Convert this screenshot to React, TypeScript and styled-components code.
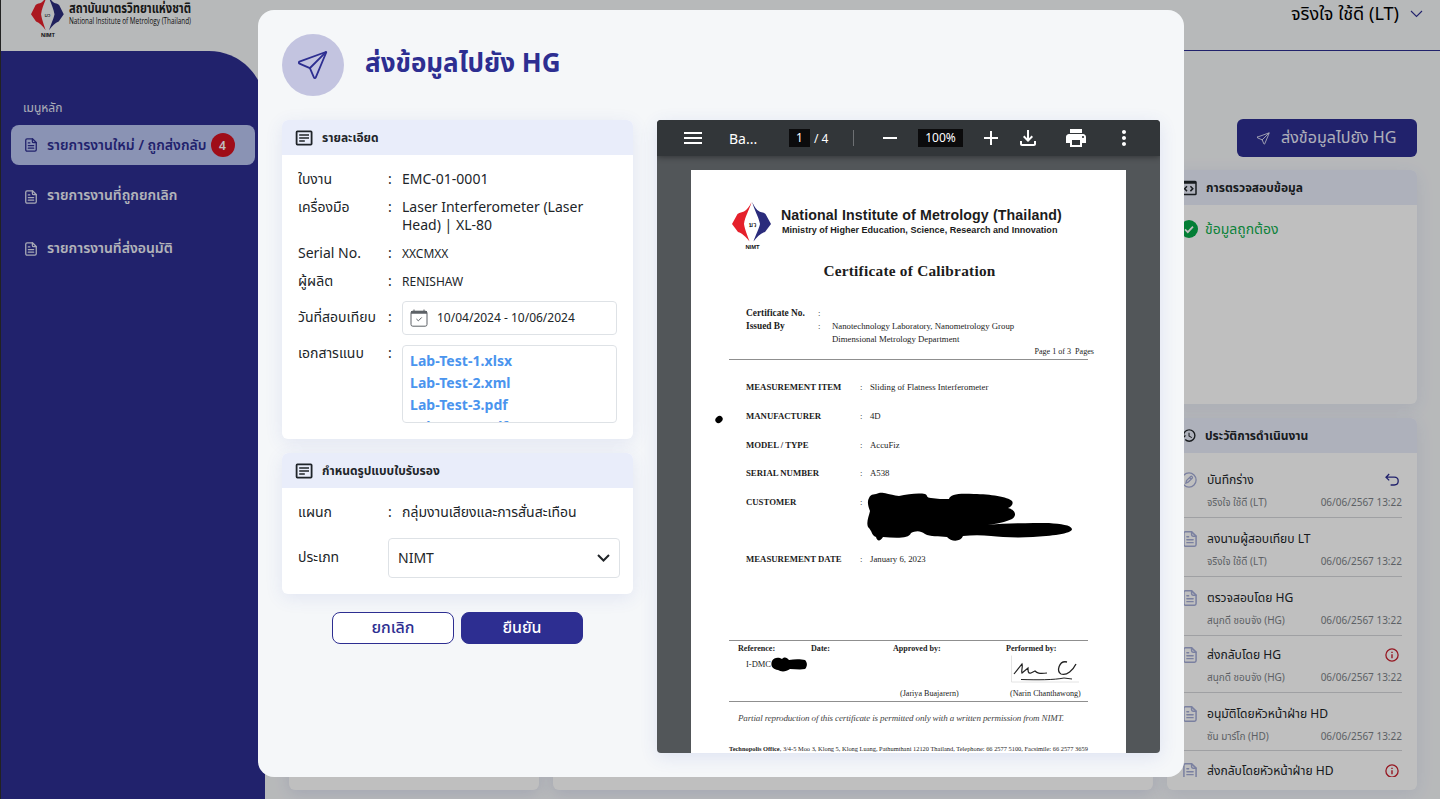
import React from "react";
import styled, { createGlobalStyle } from "styled-components";
import {
  MdAdd,
  MdHistory,
  MdMenu,
  MdMoreVert,
  MdOutlineFileDownload,
  MdPrint,
} from "react-icons/md";

const Global = createGlobalStyle`
  *, *::before, *::after { box-sizing: border-box; }
  html, body { margin: 0; padding: 0; overflow: hidden; }
  body {
    font-family: "Noto Sans", "Noto Sans Thai", sans-serif;
    font-size: 14px;
    color: #212529;
  }
  svg { display: block; flex: none; }
`;

const NAVY = "#2d2e91";

/* ---------- page shell ---------- */

const Screen = styled.div`
  position: relative;
  width: 1440px;
  height: 799px;
  overflow: hidden;
  display: flex;
  flex-direction: column;
  background: #f5f7f9;
  border-left: 1px solid #222;
`;

const TopBar = styled.header`
  height: 51px;
  flex: none;
  display: flex;
`;

const Brand = styled.div`
  width: 264px;
  flex: none;
`;

const UserArea = styled.div`
  flex: 1;
  display: flex;
  justify-content: flex-end;
  border-bottom: 1px solid ${NAVY};
`;

const UserMenu = styled.div`
  display: flex;
  align-items: center;
  gap: 11px;
  height: 28px;
  padding-right: 17px;
  color: #000;
`;

const UserName = styled.span`
  font-size: 18.1px;
  line-height: 26px;
  padding-bottom: 2px;
`;

const Body = styled.div`
  flex: 1;
  min-height: 0;
  display: flex;
`;

const Sidebar = styled.nav`
  width: 264px;
  flex: none;
  padding: 47px 10px 0;
  background: ${NAVY};
  border-top-right-radius: 56px;
`;

const MenuHeading = styled.div`
  padding-left: 12px;
  height: 20px;
  line-height: 20px;
  margin-bottom: 7px;
  font-size: 12px;
  color: #e6e9f5;
`;

const MenuItem = styled.div<{ $active?: boolean }>`
  display: flex;
  align-items: center;
  height: 40px;
  margin-bottom: 12px;
  padding-left: 14px;
  border-radius: 8px;
  font-size: 14px;
  font-weight: 600;
  color: ${(p) => (p.$active ? NAVY : "#eef0f8")};
  background: ${(p) => (p.$active ? "#b9c4f1" : "transparent")};
`;

const MenuLabel = styled.span<{ $lift?: number }>`
  margin-left: 10px;
  padding-bottom: ${(p) => p.$lift ?? 0}px;
  white-space: nowrap;
`;

const Badge = styled.span`
  width: 24px;
  height: 24px;
  margin-left: 4px;
  border-radius: 50%;
  display: grid;
  place-items: center;
  background: #d41220;
  color: #fff;
  font-size: 12px;
`;

const Workspace = styled.main`
  flex: 1;
  display: grid;
  grid-template-columns: 250px 600px 250px;
  column-gap: 14px;
  padding: 68px 23px 9px 24px;
`;

const BlankPanel = styled.div`
  background: #fff;
  border-radius: 6px;
  box-shadow: 0 4px 16px rgba(45, 60, 170, 0.12);
`;

const RightColumn = styled.div`
  display: flex;
  flex-direction: column;
  min-height: 0;
`;

const SendButton = styled.button`
  align-self: flex-end;
  width: 180px;
  height: 38px;
  flex: none;
  margin-bottom: 13px;
  border: 0;
  border-radius: 6px;
  display: flex;
  align-items: center;
  justify-content: flex-start;
  gap: 11px;
  padding: 0 0 0 20px;
  background: ${NAVY};
  color: #e9eaf8;
  font-family: inherit;
  font-size: 16.1px;
  white-space: nowrap;
`;

const Panel = styled.section<{ $height: number; $gap?: number }>`
  height: ${(p) => p.$height}px;
  margin-bottom: ${(p) => p.$gap ?? 0}px;
  flex: none;
  display: flex;
  flex-direction: column;
  border-radius: 6px;
  overflow: hidden;
  background: #fff;
  box-shadow: 0 4px 18px rgba(60, 80, 190, 0.1);
`;

const PanelHead = styled.h3<{ $gap?: number }>`
  height: 35px;
  flex: none;
  margin: 0;
  padding: 0 0 0 13px;
  display: flex;
  align-items: center;
  gap: ${(p) => p.$gap ?? 9}px;
  background: #e9edfa;
  font-size: 12px;
  line-height: 16px;
  font-weight: 700;
`;

const Valid = styled.div`
  display: flex;
  align-items: center;
  gap: 7px;
  padding: 14px 0 0 13px;
  line-height: 20px;
  color: #0fae4e;
`;

const HistoryList = styled.div`
  height: 324px;
  padding: 6px 15px 0 14px;
  overflow: hidden;
`;

const HistoryItem = styled.div<{ $height: number; $top: number }>`
  display: grid;
  grid-template-columns: 16px 1fr auto;
  grid-template-rows: 24px 1fr;
  column-gap: 10px;
  height: ${(p) => p.$height}px;
  padding-top: ${(p) => p.$top}px;
  border-bottom: 1px solid #d4d6da;
  > svg { align-self: center; justify-self: end; }
  > svg:nth-child(3) { margin-right: 3px; }
`;

const HistoryTitle = styled.div`
  line-height: 24px;
  font-size: 12.1px;
  white-space: nowrap;
`;

const HistoryMeta = styled.div`
  grid-column: 2 / 4;
  display: flex;
  justify-content: space-between;
  font-size: 10px;
  line-height: 21px;
  color: #7d8187;
`;

/* ---------- modal ---------- */

const Backdrop = styled.div`
  position: absolute;
  inset: 0 0 0 -1px;
  background: rgba(0, 0, 0, 0.25);
`;

const Modal = styled.div`
  position: absolute;
  left: 257px;
  top: 10px;
  width: 926px;
  height: 767px;
  padding: 24px;
  border-radius: 16px;
  background: #f5f7f9;
  display: flex;
  flex-direction: column;
`;

const ModalHead = styled.div`
  display: flex;
  align-items: center;
  gap: 21px;
  margin-bottom: 24px;
`;

const IconDisc = styled.div`
  width: 62px;
  height: 62px;
  border-radius: 50%;
  display: grid;
  place-items: center;
  background: #c3c4e0;
  color: ${NAVY};
`;

const ModalTitle = styled.h1`
  margin: 0;
  font-size: 26px;
  line-height: 36px;
  font-weight: 700;
  color: ${NAVY};
  padding-bottom: 6px;
`;

const ModalBody = styled.div`
  display: grid;
  grid-template-columns: 351px 503px;
  column-gap: 24px;
  height: 633px;
`;

const Fields = styled.div`
  display: flex;
  flex-direction: column;
  gap: 10px;
  padding: 15px 16px 0;
`;

const Field = styled.div<{ $pad?: number; $offset?: number }>`
  display: grid;
  grid-template-columns: 90px 14px 1fr;
  line-height: 18px;
  margin-top: ${(p) => p.$offset ?? 0}px;
  > span { padding-top: ${(p) => p.$pad ?? 0}px; white-space: nowrap; }
`;

const Value = styled.div<{ $small?: boolean }>`
  font-size: ${(p) => (p.$small ? 12 : 14)}px;
  padding-top: ${(p) => (p.$small ? 1 : 0)}px;
  height: ${(p) => (p.$small ? "18px" : "auto")};
`;

const DateBox = styled.div`
  height: 34px;
  display: flex;
  align-items: center;
  gap: 9px;
  padding-left: 7px;
  width: 215px;
  border: 1px solid #dee2e6;
  border-radius: 4px;
  font-size: 12px;
`;

const FileBox = styled.div`
  height: 78px;
  width: 215px;
  margin-top: 1px;
  padding: 4px 7px;
  border: 1px solid #dee2e6;
  border-radius: 4px;
  overflow: hidden;
`;

const FileLink = styled.a`
  display: block;
  line-height: 22px;
  font-weight: 700;
  letter-spacing: 0.05px;
  color: #4a94ee;
`;

const SelectRow = styled.div`
  display: grid;
  grid-template-columns: 90px 232px;
  align-items: center;
  margin-top: 7px;
  > span { padding-bottom: 2px; }
`;

const SelectBox = styled.div`
  height: 40px;
  display: flex;
  align-items: center;
  justify-content: space-between;
  padding: 0 9px 1px;
  border: 1px solid #dee2e6;
  border-radius: 4px;
`;

const Actions = styled.div`
  display: flex;
  justify-content: center;
  gap: 7px;
  padding-top: 4px;
`;

const ActionButton = styled.button<{ $primary?: boolean }>`
  width: 122px;
  height: 32px;
  padding: 0 0 2px;
  border: 1px solid ${NAVY};
  border-radius: 8px;
  font-family: inherit;
  font-size: 16px;
  font-weight: 500;
  line-height: 28px;
  color: ${(p) => (p.$primary ? "#fff" : NAVY)};
  background: ${(p) => (p.$primary ? NAVY : "#fff")};
`;

/* ---------- document viewer ---------- */

const Viewer = styled.div`
  display: flex;
  flex-direction: column;
  border-radius: 4px;
  overflow: hidden;
  background: #525659;
  box-shadow: 0 4px 18px rgba(60, 80, 190, 0.12);
`;

const Toolbar = styled.div`
  height: 36px;
  flex: none;
  display: flex;
  align-items: center;
  padding-left: 24px;
  background: #323639;
  color: #fff;
  box-shadow: 0 1px 6px rgba(0, 0, 0, 0.4);
  z-index: 1;
`;

const ToolCell = styled.div<{ $w: number }>`
  width: ${(p) => p.$w}px;
  flex: none;
`;

const ToolInput = styled.span<{ $w: number }>`
  width: ${(p) => p.$w}px;
  height: 18px;
  line-height: 18px;
  text-align: center;
  background: #0b0b0c;
  font-size: 12px;
`;

const MinusBar = styled.span`
  width: 14px;
  height: 2px;
  margin: 0 21px 0 5px;
  background: #fff;
`;

const PageTotal = styled.span`
  width: 35px;
  padding-left: 4px;
  font-size: 12px;
`;

const Divider = styled.span`
  width: 1px;
  height: 16px;
  margin: 0 24px 0 8px;
  background: #6d7073;
`;

const Sheet = styled.article`
  flex: 1;
  min-height: 0;
  width: 434.4px;
  margin: 14px 0 0 34.4px;
  padding: 31px 37.8px 0 37.6px;
  overflow: hidden;
  background: #fff;
  color: #1c1c1c;
  font-family: "Liberation Serif", serif;
  font-size: 8.75px;
  white-space: nowrap;
`;

const Letterhead = styled.div`
  display: flex;
  gap: 9px;
  height: 50px;
  padding-left: 3px;
  font-family: "Liberation Sans", sans-serif;
  font-weight: 700;
`;

const LetterName = styled.div`
  padding-top: 5px;
  font-size: 14.2px;
  letter-spacing: 0.12px;
  line-height: 18px;
`;

const LetterSub = styled.div`
  padding-left: 1px;
  font-size: 9.07px;
  line-height: 12px;
`;

const CertTitle = styled.h2`
  margin: 10px 0 26px 2px;
  text-align: center;
  font-size: 15.3px;
  letter-spacing: 0.25px;
  line-height: 20px;
`;

const IssueRow = styled.div`
  display: grid;
  grid-template-columns: 72px 14px 1fr;
  height: 13px;
  line-height: 13px;
  padding-left: 17px;
  b { font-size: 9.4px; }
`;

const PageCount = styled.div`
  text-align: right;
  margin-right: -6px;
  line-height: 11px;
  height: 13px;
  font-size: 8.1px;
`;

const Rule = styled.hr`
  margin: 0;
  border: 0;
  height: 1px;
  background: #8f8f8f;
`;

const MeasureList = styled.div`
  position: relative;
  height: 280px;
  padding: 13.4px 0 0 17px;
`;

const MeasureRow = styled.div<{ $height?: number }>`
  display: grid;
  grid-template-columns: 114px 10px 1fr;
  height: ${(p) => p.$height ?? 28.6}px;
  line-height: 28.6px;
`;

const PunchMark = styled.svg`
  position: absolute;
  left: -14px;
  top: 55px;
`;

const Scribble = styled.svg`
  margin: 4px 0 0 -3px;
  overflow: visible;
`;

const SignBlock = styled.div`
  display: grid;
  grid-template-columns: 73px 82px 113px 1fr;
  height: 60px;
  padding: 2px 0 0 9px;
  font-size: 8.1px;
  line-height: 12px;
`;

const SignCell = styled.div`
  display: flex;
  flex-direction: column;
`;

const RefCode = styled.div`
  display: flex;
  padding: 2px 0 0 8px;
  font-size: 8.5px;
  line-height: 14px;
`;

const SignName = styled.div<{ $shift: number }>`
  margin: auto 0 1px ${(p) => p.$shift}px;
`;

const Reproduction = styled.p`
  margin: 9px 0 0 9px;
  font-size: 9px;
  letter-spacing: -0.13px;
  line-height: 14px;
  font-style: italic;
  color: #444;
`;

const Address = styled.p`
  margin: 18px 0 0;
  font-size: 6.4px;
  line-height: 12px;
`;

/* ---------- drawings ---------- */

const Plane = ({ size, stroke }: { size: number; stroke: number }) => (
  <svg width={size} height={size} viewBox="0 0 30 30" fill="none" stroke="currentColor"
    strokeWidth={stroke} strokeLinejoin="round" strokeLinecap="round">
    <path d="M1.4 11.6 27.800 2c.3 0 .5.2.4.5L17.800 27.400c-.4.9-1.500.9-1.900 0l-4-9.300-10.400-4.500c-.9-.4-.9-1.600-.1-2Z" />
    <path d="M12 18 27.900 2.200" />
  </svg>
);

const Article = () => (
  <svg width="18" height="16" viewBox="0 0 18 16" fill="none" stroke="#1f2429">
    <rect x="1.6" y="1.4" width="15" height="13.2" rx="0.8" strokeWidth="1.8" />
    <path d="M4.2 5h9.8M4.2 8h9.8M4.2 11h5.6" strokeWidth="1.6" />
  </svg>
);

const FileIcon = ({ w = 12, h = 14, color }: { w?: number; h?: number; color: string }) => (
  <svg width={w} height={h} viewBox="0 0 13 15" fill="none" stroke={color} strokeWidth="1.4"
    strokeLinejoin="round" strokeLinecap="round">
    <path d="M2.2.8h5.9l4.1 4v7.9c0 .9-.6 1.5-1.5 1.5H2.2c-.8 0-1.4-.6-1.4-1.5V2.3C.8 1.4 1.4.8 2.2.8Z" />
    <path d="M8 .9v2.7c0 .8.5 1.3 1.3 1.3h2.8M3.6 5.3h1.6M3.6 8.1h5.8M3.6 10.9h5.8" />
  </svg>
);

const Calendar = () => (
  <svg width="18" height="18" viewBox="0 0 18 18" fill="none" stroke="#5c6166" strokeWidth="1">
    <rect x="1" y="2.2" width="16" height="15" rx="1.8" />
    <path d="M1 3.4h16" strokeWidth="2.6" />
    <path d="M4 .5v2M14 .5v2" />
    <path d="m6.4 10 2 1.8 3.4-3.4" />
  </svg>
);

const Chevron = ({ w, h, stroke, color }: { w: number; h: number; stroke: number; color: string }) => (
  <svg width={w} height={h} viewBox={`0 0 ${w} ${h}`} fill="none" stroke={color} strokeWidth={stroke}>
    <path d={`M1 1 ${w / 2} ${h - 1.5} ${w - 1} 1`} />
  </svg>
);

const CodeWindow = () => (
  <svg width="18" height="16" viewBox="0 0 18 16" fill="none" stroke="#1f2429" strokeWidth="1.5">
    <rect x="1.4" y="1.4" width="14.6" height="13.2" rx="0.8" />
    <path d="M1.4 2.6h14.6" strokeWidth="2.4" />
    <path d="m7 6.3-2.4 2.4L7 11.1M10.4 6.3l2.4 2.4-2.4 2.4" />
  </svg>
);

const CheckDisc = () => (
  <svg width="18" height="18" viewBox="0 0 18 18">
    <circle cx="9" cy="9" r="9" fill="#05a847" />
    <path d="m5 9.3 2.8 2.8L13 6.6" fill="none" stroke="#fff" strokeWidth="1.8" />
  </svg>
);

const PencilDisc = () => (
  <svg width="16" height="16" viewBox="0 0 16 16" fill="none" stroke="#a3abd6" strokeWidth="1.3">
    <circle cx="8" cy="8" r="7.1" />
    <path d="m4.9 11.1.6-2.5 4-4c.5-.5 1.2-.5 1.6 0 .5.5.5 1.1 0 1.6l-4 4-2.2.9ZM8.6 5.5l1.7 1.7" />
  </svg>
);

const Undo = () => (
  <svg width="14" height="14" viewBox="0 0 14 14" fill="none" stroke={NAVY} strokeWidth="1.3">
    <path d="M4.2 1 1 4.2l3.2 3.2M1 4.2h8.2c2.3 0 4 1.7 4 3.9s-1.7 3.900-4 3.900H5.6" />
  </svg>
);

const Info = () => (
  <svg width="14" height="14" viewBox="0 0 14 14" fill="none" stroke="#c8202e" strokeWidth="1.3">
    <circle cx="7" cy="7" r="6.1" />
    <path d="M7 6.2v4M7 3.8v1.2" strokeWidth="1.4" />
  </svg>
);

const EmblemShape = () => (
  <>
    <path d="M19.6 1C17 6 15 9 12 10.5c-2 1-4 .6-6.5 2.5L0 23l6 8c4 1 8 5 11.5 9.5C15 33 13 29 12 23 13 15 17 10 19.6 1Z" fill="#e5202b" />
    <path d="M20.2 1c2.5 5 4 8 7.2 9.5 2 1 3.6.6 6.1 2.5L39 23l-6 8c-4 1-8 5-11.5 9.5C24 33 26.5 29 28 23 26.5 15 22.500 10 20.2 1Z" fill="#2b2c7c" />
  </>
);

const Emblem = ({ w, h }: { w: number; h: number }) => (
  <svg width={w} height={h} viewBox="0 0 40 50">
    <EmblemShape />
    <text x="20" y="26" textAnchor="middle" fontSize="6" fill="#222" fontFamily="Noto Sans, sans-serif">มว</text>
    <text x="20.5" y="47.500" textAnchor="middle" fontSize="5.8" fontWeight="700" fill="#111"
      fontFamily="Liberation Sans, sans-serif">NIMT</text>
  </svg>
);

const BrandLogo = () => (
  <svg width="240" height="44" viewBox="0 0 240 44">
    <g transform="translate(30 -7) scale(.84 .92)"><EmblemShape /></g>
    <text x="46.5" y="17" fontSize="5.5" textAnchor="middle" fill="#222">มว</text>
    <text x="47" y="37.3" fontSize="5.7" fontWeight="700" textAnchor="middle" fill="#111"
      fontFamily="Liberation Sans, sans-serif">NIMT</text>
    <text x="68" y="13.3" fontSize="14.5" fontWeight="700" textLength="122" lengthAdjust="spacingAndGlyphs" fill="#222">
      สถาบันมาตรวิทยาแห่งชาติ
    </text>
    <text x="68" y="24.2" fontSize="8.8" textLength="122" lengthAdjust="spacingAndGlyphs" fill="#111"
      fontFamily="Open Sans, sans-serif">
      National Institute of Metrology (Thailand)
    </text>
  </svg>
);

const history = [
  { title: "บันทึกร่าง", by: "จริงใจ ใช้ดี (LT)", icon: "pencil", mark: "undo", h: 59, top: 9 },
  { title: "ลงนามผู้สอบเทียบ LT", by: "จริงใจ ใช้ดี (LT)", icon: "file", mark: "", h: 59, top: 9 },
  { title: "ตรวจสอบโดย HG", by: "สนุกดี ชอบจัง (HG)", icon: "file", mark: "", h: 59, top: 9 },
  { title: "ส่งกลับโดย HG", by: "สนุกดี ชอบจัง (HG)", icon: "file", mark: "info", h: 57, top: 7 },
  { title: "อนุมัติโดยหัวหน้าฝ่าย HD", by: "ซัน มาร์โก (HD)", icon: "file", mark: "", h: 58, top: 9 },
  { title: "ส่งกลับโดยหัวหน้าฝ่าย HD", by: "ซัน มาร์โก (HD)", icon: "file", mark: "info", h: 59, top: 8 },
];

const measurements: [string, string][] = [
  ["MEASUREMENT ITEM", "Sliding of Flatness Interferometer"],
  ["MANUFACTURER", "4D"],
  ["MODEL / TYPE", "AccuFiz"],
  ["SERIAL NUMBER", "A538"],
];

const Certificate = () => (
  <Sheet>
    <Letterhead>
      <Emblem w={40} h={50} />
      <div>
        <LetterName>National Institute of Metrology (Thailand)</LetterName>
        <LetterSub>Ministry of Higher Education, Science, Research and Innovation</LetterSub>
      </div>
    </Letterhead>
    <CertTitle>Certificate of Calibration</CertTitle>
    <IssueRow><b>Certificate No.</b><span>:</span></IssueRow>
    <IssueRow><b>Issued By</b><span>:</span><span>Nanotechnology Laboratory, Nanometrology Group</span></IssueRow>
    <IssueRow><span /><span /><span>Dimensional Metrology Department</span></IssueRow>
    <PageCount>Page 1 of 3&nbsp; Pages</PageCount>
    <Rule />
    <MeasureList>
      {measurements.map(([k, v]) => (
        <MeasureRow key={k}><b>{k}</b><span>:</span><span>{v}</span></MeasureRow>
      ))}
      <MeasureRow $height={57.3}>
        <b>CUSTOMER</b>
        <span>:</span>
        <Scribble width="206" height="50" viewBox="0 0 206 50">
          <path d="M2 6C4 1 8 3 12 1c4-1 7 1 20 3 9-2 19-3 26-2 3 1 1 4 6 4 6 1 12 1 18 1 1-5 10-6 25-5 16 0 34 3 38 7 2 3-1 6-4 7 8 2 9 8 4 11-6 3-16 5-24 6 20-2 45-2 61-2 12 1 22 2 23 6 0 5-22 7-39 8-17 1-32 0-42-1-9-1-19-1-28 0-2 6-12 6-16 1-8-1-17 0-22-3-5-4-10-3-14-1-2 6-16 5-28 4-3 5-6 4-7 0C4 43 6 40 1 35-1 30 2 24 3 19 1 14 0 9 2 6Z" fill="#000" />
        </Scribble>
      </MeasureRow>
      <MeasureRow><b>MEASUREMENT DATE</b><span>:</span><span>January 6, 2023</span></MeasureRow>
      <PunchMark width="8" height="9" viewBox="0 0 8 9">
        <ellipse cx="4" cy="4.5" rx="3.9" ry="3.2" transform="rotate(-40 4 4.5)" />
      </PunchMark>
    </MeasureList>
    <Rule />
    <SignBlock>
      <SignCell>
        <b>Reference:</b>
        <RefCode>
          I-DMC
          <svg width="36" height="15" viewBox="0 0 36 15">
            <path d="M1 4C3 0 8 0 11 2c3-3 5-1 7 1 5-1 12-1 16 0 3 3 2 7 0 9-5 1-10 0-15 0-4 3-9 3-12 1C2 12-1 9 1 4Z" />
          </svg>
        </RefCode>
      </SignCell>
      <SignCell><b>Date:</b></SignCell>
      <SignCell>
        <b>Approved by:</b>
        <SignName $shift={7}>(Jariya Buajarern)</SignName>
      </SignCell>
      <SignCell>
        <b>Performed by:</b>
        <svg width="74" height="28" viewBox="0 0 74 28" fill="none">
          <path d="M5.5 .5v26.5H73" stroke="#ddd" strokeWidth=".8" />
          <path d="M8 19 16 9c1 3-1 7 0 9l6-5c0 3 0 6 3 5l4-2c2 2 4 3 12 2" stroke="#222" strokeWidth="1.2" />
          <path d="M61 7c-8-2-11 10-6 12 6 2 12-4 15-10" stroke="#222" strokeWidth="1.3" />
          <path d="M15 24.5c16 .5 33 .5 43-1.500l8 1" stroke="#222" strokeWidth="1" />
        </svg>
        <SignName $shift={4}>(Narin Chanthawong)</SignName>
      </SignCell>
    </SignBlock>
    <Rule />
    <Reproduction>Partial reproduction of this certificate is permitted only with a written permission from NIMT.</Reproduction>
    <Address>
      <b>Technopolis Office</b>, 3/4-5 Moo 3, Klong 5, Klong Luang, Pathumthani 12120 Thailand, Telephone: 66 2577 5100, Facsimile: 66 2577 3659
    </Address>
  </Sheet>
);

export default function App() {
  return (
    <>
      <Global />
      <Screen>
        <TopBar>
          <Brand><BrandLogo /></Brand>
          <UserArea>
            <UserMenu>
              <UserName>จริงใจ ใช้ดี (LT)</UserName>
              <Chevron w={13} h={8} stroke={1.1} color={NAVY} />
            </UserMenu>
          </UserArea>
        </TopBar>
        <Body>
          <Sidebar>
            <MenuHeading>เมนูหลัก</MenuHeading>
            <MenuItem $active>
              <FileIcon color={NAVY} />
              <MenuLabel>รายการงานใหม่ / ถูกส่งกลับ</MenuLabel>
              <Badge>4</Badge>
            </MenuItem>
            <MenuItem>
              <FileIcon color="#dfe2f2" />
              <MenuLabel $lift={4}>รายการงานที่ถูกยกเลิก</MenuLabel>
            </MenuItem>
            <MenuItem>
              <FileIcon color="#dfe2f2" />
              <MenuLabel $lift={1}>รายการงานที่ส่งอนุมัติ</MenuLabel>
            </MenuItem>
          </Sidebar>
          <Workspace>
            <BlankPanel />
            <BlankPanel />
            <RightColumn>
              <SendButton><Plane size={13} stroke={2} />ส่งข้อมูลไปยัง HG</SendButton>
              <Panel $height={234} $gap={14}>
                <PanelHead $gap={8}><CodeWindow />การตรวจสอบข้อมูล</PanelHead>
                <Valid><CheckDisc />ข้อมูลถูกต้อง</Valid>
              </Panel>
              <Panel $height={372}>
                <PanelHead $gap={8}><MdHistory size={17} />ประวัติการดำเนินงาน</PanelHead>
                <HistoryList>
                  {history.map((item) => (
                    <HistoryItem key={item.title} $height={item.h} $top={item.top}>
                      {item.icon === "pencil" ? <PencilDisc /> : <FileIcon w={14} h={16} color="#a3abd6" />}
                      <HistoryTitle>{item.title}</HistoryTitle>
                      {item.mark === "undo" ? <Undo /> : item.mark === "info" ? <Info /> : <span />}
                      <HistoryMeta><span>{item.by}</span><span>06/06/2567 13:22</span></HistoryMeta>
                    </HistoryItem>
                  ))}
                </HistoryList>
              </Panel>
            </RightColumn>
          </Workspace>
        </Body>

        <Backdrop />
        <Modal>
          <ModalHead>
            <IconDisc><Plane size={30} stroke={1.8} /></IconDisc>
            <ModalTitle>ส่งข้อมูลไปยัง HG</ModalTitle>
          </ModalHead>
          <ModalBody>
            <div>
              <Panel $height={319} $gap={14}>
                <PanelHead><Article />รายละเอียด</PanelHead>
                <Fields>
                  <Field><span>ใบงาน</span><span>:</span><Value>EMC-01-0001</Value></Field>
                  <Field><span>เครื่องมือ</span><span>:</span><Value>Laser Interferometer (Laser Head) | XL-80</Value></Field>
                  <Field><span>Serial No.</span><span>:</span><Value $small>XXCMXX</Value></Field>
                  <Field><span>ผู้ผลิต</span><span>:</span><Value $small>RENISHAW</Value></Field>
                  <Field $pad={7} $offset={1}>
                    <span>วันที่สอบเทียบ</span><span>:</span>
                    <DateBox><Calendar />10/04/2024 - 10/06/2024</DateBox>
                  </Field>
                  <Field $offset={-1}>
                    <span>เอกสารแนบ</span><span>:</span>
                    <FileBox>
                      <FileLink>Lab-Test-1.xlsx</FileLink>
                      <FileLink>Lab-Test-2.xml</FileLink>
                      <FileLink>Lab-Test-3.pdf</FileLink>
                      <FileLink>Lab-Test-4.pdf</FileLink>
                    </FileBox>
                  </Field>
                </Fields>
              </Panel>
              <Panel $height={141} $gap={14}>
                <PanelHead><Article />กำหนดรูปแบบใบรับรอง</PanelHead>
                <Fields>
                  <Field><span>แผนก</span><span>:</span><Value>กลุ่มงานเสียงและการสั่นสะเทือน</Value></Field>
                  <SelectRow>
                    <span>ประเภท</span>
                    <SelectBox>NIMT<Chevron w={13} h={8} stroke={2} color="#212529" /></SelectBox>
                  </SelectRow>
                </Fields>
              </Panel>
              <Actions>
                <ActionButton>ยกเลิก</ActionButton>
                <ActionButton $primary>ยืนยัน</ActionButton>
              </Actions>
            </div>
            <Viewer>
              <Toolbar>
                <ToolCell $w={48}><MdMenu size={24} /></ToolCell>
                <ToolCell $w={60}>Ba...</ToolCell>
                <ToolInput $w={21}>1</ToolInput>
                <PageTotal>/ 4</PageTotal>
                <Divider />
                <MinusBar />
                <ToolInput $w={45}>100%</ToolInput>
                <ToolCell $w={16} />
                <ToolCell $w={37}><MdAdd size={24} /></ToolCell>
                <ToolCell $w={48}><MdOutlineFileDownload size={24} /></ToolCell>
                <ToolCell $w={48}><MdPrint size={24} /></ToolCell>
                <MdMoreVert size={24} />
              </Toolbar>
              <Certificate />
            </Viewer>
          </ModalBody>
        </Modal>
      </Screen>
    </>
  );
}
